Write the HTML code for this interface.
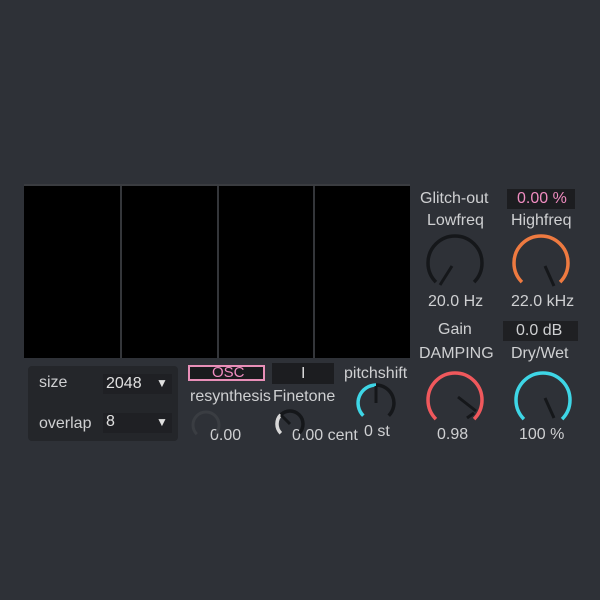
<!DOCTYPE html>
<html><head><style>
body{margin:0;width:600px;height:600px;background:#2e3137;overflow:hidden;position:relative;font-family:"Liberation Sans",sans-serif;}
.t{position:absolute;color:#cfd0d2;font-size:16px;white-space:nowrap;line-height:1;}
.box{position:absolute;background:#1c1d20;}
</style></head><body>
<div style="position:absolute;left:24px;top:184px;width:386px;height:174px;background:#000;border-top:2px solid #3a3c40;box-sizing:border-box;"></div>
<div style="position:absolute;left:120px;top:186px;width:2px;height:172px;background:#34363a"></div>
<div style="position:absolute;left:217px;top:186px;width:2px;height:172px;background:#34363a"></div>
<div style="position:absolute;left:313px;top:186px;width:2px;height:172px;background:#34363a"></div>

<div style="position:absolute;left:28px;top:366px;width:150px;height:75px;background:#24262a;border-radius:4px"></div>
<div class="t" style="left:39px;top:375px">size</div>
<div class="box" style="left:103px;top:374px;width:69px;height:20px;background:#1f2024"></div>
<div class="t" style="left:106px;top:376px;color:#e0e0e0">2048</div>
<div class="t" style="left:156px;top:377px;font-size:12px;color:#e0e0e0">▼</div>
<div class="t" style="left:39px;top:416px">overlap</div>
<div class="box" style="left:103px;top:413px;width:69px;height:20px;background:#1f2024"></div>
<div class="t" style="left:106px;top:414px;color:#e0e0e0">8</div>
<div class="t" style="left:156px;top:416px;font-size:12px;color:#e0e0e0">▼</div>

<div style="position:absolute;left:188px;top:365px;width:77px;height:16px;border:2px solid #e88fb8;box-sizing:border-box;background:#1a1b1e"></div>
<div class="t" style="left:212px;top:365px;color:#f08cc0;font-size:15px">OSC</div>
<div class="box" style="left:272px;top:363px;width:62px;height:21px"></div>
<div class="t" style="left:301px;top:366px;color:#ddd">I</div>
<div class="t" style="left:344px;top:366px">pitchshift</div>
<div class="t" style="left:190px;top:389px">resynthesis</div>
<div class="t" style="left:273px;top:389px">Finetone</div>
<div class="t" style="left:210px;top:428px">0.00</div>
<div class="t" style="left:292px;top:428px">0.00 cent</div>
<div class="t" style="left:364px;top:424px">0 st</div>

<div class="t" style="left:420px;top:191px">Glitch-out</div>
<div class="box" style="left:507px;top:189px;width:68px;height:20px"></div>
<div class="t" style="left:517px;top:191px;color:#f08cc0">0.00 %</div>
<div class="t" style="left:427px;top:213px">Lowfreq</div>
<div class="t" style="left:511px;top:213px">Highfreq</div>
<div class="t" style="left:428px;top:294px">20.0 Hz</div>
<div class="t" style="left:511px;top:294px">22.0 kHz</div>
<div class="t" style="left:438px;top:322px">Gain</div>
<div class="box" style="left:503px;top:321px;width:75px;height:20px;background:#1f2023"></div>
<div class="t" style="left:516px;top:323px">0.0 dB</div>
<div class="t" style="left:419px;top:346px">DAMPING</div>
<div class="t" style="left:511px;top:346px">Dry/Wet</div>
<div class="t" style="left:437px;top:427px">0.98</div>
<div class="t" style="left:519px;top:427px">100 %</div>

<svg width="600" height="600" style="position:absolute;left:0;top:0" fill="none" stroke-linecap="butt">
<path d="M435.9 282.1 A27 27 0 1 1 474.1 282.1" stroke="#15171a" stroke-width="3.5"/>
<path d="M452 266 L440 285" stroke="#15171a" stroke-width="3"/>
<path d="M521.9 282.1 A27 27 0 1 1 560.1 282.1" stroke="#ee7a40" stroke-width="3.5"/>
<path d="M545 266 L554 286" stroke="#15171a" stroke-width="3"/>
<path d="M435.9 419.1 A27 27 0 1 1 474.1 419.1" stroke="#f0585c" stroke-width="3.5"/>
<path d="M458 397 L476 411 M474 413 L467 418" stroke="#15171a" stroke-width="3"/>
<path d="M523.9 419.1 A27 27 0 1 1 562.1 419.1" stroke="#3ed6e6" stroke-width="3.5"/>
<path d="M545 398 L554 418" stroke="#15171a" stroke-width="3"/>
<path d="M363.3 415.7 A18 18 0 0 1 376 385" stroke="#3ed6e6" stroke-width="3.5"/>
<path d="M376 385 A18 18 0 0 1 388.7 415.7" stroke="#15171a" stroke-width="3.5"/>
<path d="M376 403 L376 386" stroke="#15171a" stroke-width="3"/>
<path d="M196.8 434.2 A13 13 0 1 1 215.2 434.2" stroke="#3a3d42" stroke-width="3"/>
<path d="M280.8 433.2 A13 13 0 0 1 280.8 414.8" stroke="#d8d8d8" stroke-width="3.5"/>
<path d="M280.8 414.8 A13 13 0 0 1 299.2 433.2" stroke="#15171a" stroke-width="3.5"/>
<path d="M290 424 L281 415" stroke="#15171a" stroke-width="3"/>
</svg>
</body></html>
